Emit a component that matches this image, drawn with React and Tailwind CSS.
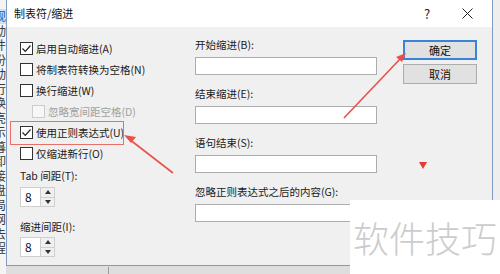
import React from "react";

const FONT = { fontFamily: '"Noto Sans CJK SC", "Noto Sans", sans-serif' };

// Sidebar text of the window behind the dialog (only a sliver shows)
const BEHIND = ["观", "动", "件", "份", "动", "行", "换", "亮", "示", "暮", "卸", "接", "盘", "局", "网", "去", "程"];

const Check = ({ checked, disabled }) => (
  <span
    className={`w-[13px] h-[13px] shrink-0 border flex items-center justify-center ${
      disabled ? "border-[#cccccc] bg-[#f7f7f7]" : "border-[#333333] bg-white"
    }`}
  >
    {checked && (
      <svg width="11" height="11" viewBox="0 0 11 11" fill="none">
        <path d="M1.5 5.5l2.8 2.8L9.5 2.5" stroke="#222" strokeWidth="1.2" />
      </svg>
    )}
  </span>
);

const CheckRow = ({ label, checked, disabled, indent }) => (
  <div className={`h-[21px] flex items-center gap-[3px] ${indent ? "pl-[12px]" : ""}`}>
    <Check checked={checked} disabled={disabled} />
    <span className={disabled ? "text-[#a0a0a0]" : "text-[#1a1a1a]"}>{label}</span>
  </div>
);

const Spinner = () => (
  <div className="flex h-[20px] w-[35px]">
    <div className="w-[21px] bg-white border border-[#cfcfcf] flex items-center pl-[4px] text-[12px] text-[#111]">
      8
    </div>
    <div className="w-[14px] flex flex-col border border-l-0 border-[#cfcfcf] bg-[#f0f0f0]">
      <div className="flex-1 flex items-center justify-center border-b border-[#cfcfcf]">
        <svg width="6" height="4" viewBox="0 0 6 4">
          <path d="M0 4L3 0L6 4Z" fill="#333" />
        </svg>
      </div>
      <div className="flex-1 flex items-center justify-center">
        <svg width="6" height="4" viewBox="0 0 6 4">
          <path d="M0 0L3 4L6 0Z" fill="#333" />
        </svg>
      </div>
    </div>
  </div>
);

const Field = ({ label }) => (
  <div className="flex flex-col mb-[12px]">
    <span className="h-[14px] leading-[14px] text-[#1a1a1a]">{label}</span>
    <div className="mt-[5px] h-[18px] w-[182px] bg-white border border-[#adadad]" />
  </div>
);

export default function App() {
  return (
    <div
      className="relative w-[500px] h-[274px] overflow-hidden bg-[#dedede] flex text-[10.5px]"
      style={FONT}
    >
      {/* window behind */}
      <div className="w-[6px] h-full overflow-hidden bg-[#f4f4f4] shrink-0">
        <div className="-ml-[6px] pt-[9px] flex flex-col text-[12px] text-[#3a3a3a]">
          {BEHIND.map((c, i) => (
            <span
              key={i}
              className={`block h-[14.5px] leading-[14.5px] overflow-hidden ${
                i === 0 ? "bg-[#cde0f7] text-[#2a5ea8]" : ""
              }`}
            >
              {c}
            </span>
          ))}
        </div>
      </div>

      {/* dialog */}
      <div className="w-[487px] h-[266px] shrink-0 border-x border-b border-[#7d9cc4] flex flex-col bg-[#f0f0f0]">
        <div className="h-[27px] bg-white flex items-center pl-[7px] text-[11px] text-[#111]">
          <span className="flex-1">制表符/缩进</span>
          <span className="w-[40px] text-center text-[13px] text-[#222]">?</span>
          <span className="w-[40px] flex justify-center mr-[5px]">
            <svg width="11" height="11" viewBox="0 0 11 11">
              <path d="M0.5 0.5L10.5 10.5M10.5 0.5L0.5 10.5" stroke="#222" strokeWidth="1" />
            </svg>
          </span>
        </div>

        <div className="flex flex-1 pt-[11px]">
          {/* left column */}
          <div className="w-[188px] pl-[13px] flex flex-col">
            <CheckRow label="启用自动缩进(A)" checked />
            <CheckRow label="将制表符转换为空格(N)" />
            <CheckRow label="换行缩进(W)" />
            <CheckRow label="忽略宽间距空格(D)" disabled indent />
            <CheckRow label="使用正则表达式(U)" checked />
            <CheckRow label="仅缩进新行(O)" />
            <span className="mt-[5px] h-[14px] leading-[14px] text-[#1a1a1a]">Tab 间距(T):</span>
            <div className="mt-[4px]">
              <Spinner />
            </div>
            <span className="mt-[13px] h-[14px] leading-[14px] text-[#1a1a1a]">缩进间距(I):</span>
            <div className="mt-[3px]">
              <Spinner />
            </div>
          </div>

          {/* right column */}
          <div className="flex flex-col">
            <Field label="开始缩进(B):" />
            <Field label="结束缩进(E):" />
            <Field label="语句结束(S):" />
            <Field label="忽略正则表达式之后的内容(G):" />
          </div>

          {/* buttons */}
          <div className="ml-[26px] pt-[2px] flex flex-col gap-[4px]">
            <button className="w-[74px] h-[20px] border-2 border-[#3b83d6] bg-[#e1e1e1] text-[11px] text-[#111]">
              确定
            </button>
            <button className="w-[74px] h-[20px] border border-[#adadad] bg-[#e1e1e1] text-[11px] text-[#111]">
              取消
            </button>
          </div>
        </div>
      </div>

      {/* right edge of the screen behind */}
      <div className="flex-1 h-full bg-[#eeeeee]" />

      {/* annotations */}
      <svg className="absolute inset-0 pointer-events-none" width="500" height="274" viewBox="0 0 500 274">
        <line x1="108.5" y1="267" x2="108.5" y2="274" stroke="#9a9a9a" strokeWidth="1" />
        <rect x="10.5" y="121.5" width="113" height="23" fill="none" stroke="#e8706a" strokeWidth="1" />
        <line x1="344" y1="118" x2="401" y2="58" stroke="#e8524a" strokeWidth="1.6" />
        <path d="M406 53L396 57L402 62Z" fill="#e8524a" />
        <line x1="173" y1="173" x2="129" y2="139" stroke="#e8524a" strokeWidth="1.6" />
        <path d="M124 135L136 137L131 143Z" fill="#e8524a" />
        <path d="M419 162L427 162L423 169Z" fill="#e53935" />
      </svg>

      {/* watermark */}
      <div className="absolute left-[350px] top-[200px] w-[150px] h-[74px] bg-white flex items-center justify-center">
        <span className="text-[36px] font-light text-[#cccccc]">软件技巧</span>
      </div>
    </div>
  );
}
